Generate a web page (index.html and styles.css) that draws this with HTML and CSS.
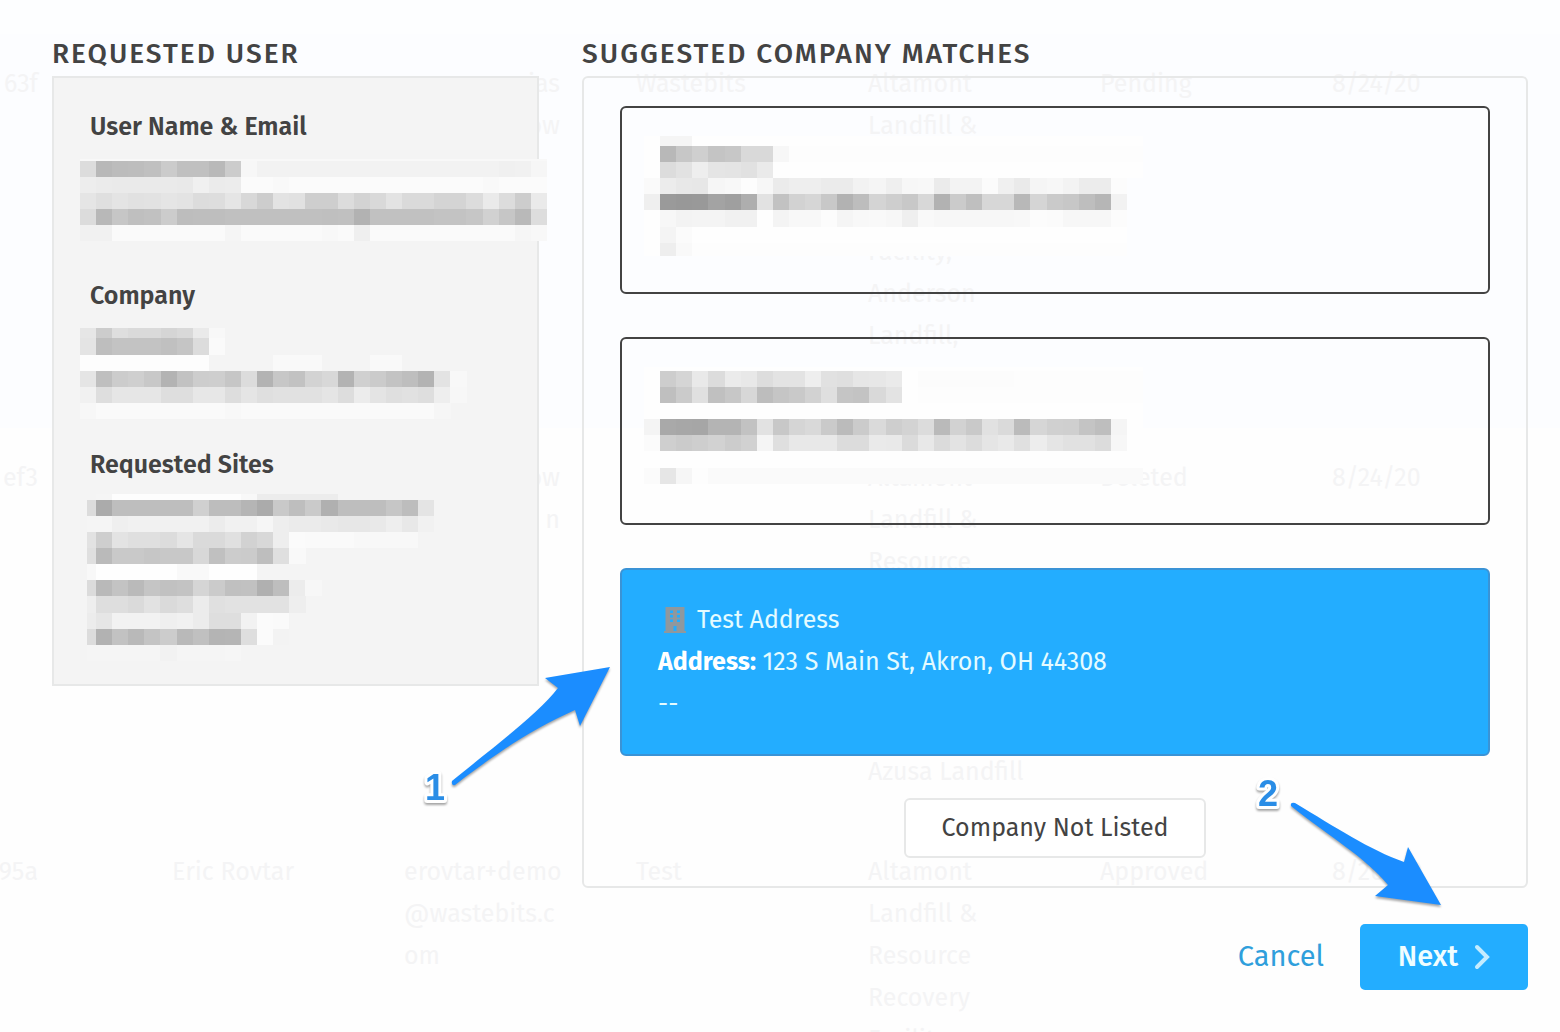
FILE: index.html
```html
<!DOCTYPE html>
<html lang="en">
<head>
    <meta charset="utf-8">
    <title>Suggested Company Matches</title>
    <link rel="stylesheet" href="styles.css">
</head>
<body>
    <div class="requests">
        <table>
            <tbody>
                <tr>
                    <td class="cut">63f</td>
                    <td></td>
                    <td class="cut">ias<br>ow</td>
                    <td>Wastebits</td>
                    <td>Altamont<br>Landfill &amp;<br>Resource<br>Recovery<br>Facility,<br>Anderson<br>Landfill,<br>&nbsp;</td>
                    <td>Pending</td>
                    <td>8/24/20</td>
                </tr>
                <tr>
                    <td class="cut">ef3</td>
                    <td></td>
                    <td class="cut">ow<br>n</td>
                    <td></td>
                    <td>Altamont<br>Landfill &amp;<br>Resource<br>Recovery<br>Facility,<br>Anderson<br>Landfill,<br>Azusa Landfill</td>
                    <td>Deleted</td>
                    <td>8/24/20</td>
                </tr>
                <tr>
                    <td class="cut">f95a</td>
                    <td>Eric Rovtar</td>
                    <td>erovtar+demo<br>@wastebits.c<br>om</td>
                    <td>Test</td>
                    <td>Altamont<br>Landfill &amp;<br>Resource<br>Recovery<br>Facility,</td>
                    <td>Approved</td>
                    <td>8/20/20</td>
                </tr>
            </tbody>
        </table>
    </div>

    <main class="modal">
        <div class="columns">
            <section>
                <h2>Requested User</h2>
                <div class="user-panel">
                    <div class="field">
                        <h3>User Name &amp; Email</h3>
                        <svg class="redacted" id="userBlock"></svg>
                    </div>
                    <div class="field">
                        <h3>Company</h3>
                        <svg class="redacted" id="companyBlock"></svg>
                    </div>
                    <div class="field">
                        <h3>Requested Sites</h3>
                        <svg class="redacted sites" id="sitesBlock"></svg>
                    </div>
                </div>
            </section>

            <section>
                <h2>Suggested Company Matches</h2>
                <div class="match-panel">
                    <ul class="matches">
                        <li>
                            <button type="button" class="match" aria-label="Match 1">
                                <svg class="redacted" id="matchOne"></svg>
                            </button>
                        </li>
                        <li>
                            <button type="button" class="match" aria-label="Match 2">
                                <svg class="redacted" id="matchTwo"></svg>
                            </button>
                        </li>
                        <li>
                            <button type="button" class="match selected">
                                <span class="line name">
                                    <svg class="building" viewBox="0 0 22 26" width="22" height="26">
                                        <path fill="#8f989e" fill-rule="evenodd" d="M1.5 0h19v24H22v2H0v-2h1.500zM6 3.500v2.500h3V3.500zm7 0v2.500h3V3.500zM6 8v2.500h3V8zm7 0v2.500h3V8zM6 12.500V15h3v-2.500zm7 0V15h3v-2.500zM9.500 19v5h3v-5z"/>
                                    </svg>
                                    Test Address
                                </span>
                                <span class="line"><b>Address:</b> 123 S Main St, Akron, OH 44308</span>
                                <span class="line">--</span>
                            </button>
                            <svg class="arrow arrow-one" viewBox="420 660 200 150" width="200" height="150">
                                <path d="M610 667L545 678L558 688C540 712 500 742 452 781Q451 786 455 785C500 750 535 728 575 710L580 726Z"/>
                                <text x="425" y="800">1</text>
                            </svg>
                        </li>
                    </ul>
                    <button type="button" class="not-listed">Company Not Listed</button>
                </div>
            </section>
        </div>

        <footer class="actions">
            <a href="#" class="cancel">Cancel</a>
            <button type="button" class="next">
                Next
                <svg viewBox="0 0 16 26" width="16" height="26"><path d="M3 3l10 10L3 23" fill="none" stroke="#c4ecff" stroke-width="4" stroke-linecap="round"/></svg>
            </button>
            <svg class="arrow arrow-two" viewBox="1250 770 200 140" width="200" height="140">
                <path d="M1441 905L1408 847L1404 862C1370 850 1335 827 1295 803Q1290 802 1291 806C1330 837 1365 857 1388 885L1375 896Z"/>
                <text x="1258" y="806">2</text>
            </svg>
        </footer>
    </main>

    <script src="redact.js"></script>
</body>
</html>
```
FILE: styles.css
```css
* {
    box-sizing: border-box;
}
body {
    margin: 0;
    min-height: 100vh;
    overflow: hidden;
    background-color: #fefefe;
    color: #434343;
    font-family: "Fira Sans", "Noto Sans", sans-serif;
    font-size: 25px;
    line-height: 42px;
}

/* faded table behind the dialog */
.requests {
    position: absolute;
    top: 0;
    left: 0;
    right: 0;
    height: 100vh;
    padding-top: 34px;
    overflow: hidden;
    background-color: #fdfeff;
    color: #f4f4f5;
}
.requests table {
    width: calc(100% + 64px);
    margin-left: -60px;
    table-layout: fixed;
    border-collapse: collapse;
}
.requests td {
    padding: 29px 0;
    vertical-align: top;
    white-space: nowrap;
}
.requests .cut {
    padding-right: 76px;
    text-align: right;
}
.requests .cut:first-child {
    padding-right: 134px;
}
.requests tr {
    background-color: #fefefe;
}
.requests tr:first-child {
    background-color: #fcfdff;
}

.modal {
    position: relative;
    padding: 32px 32px 42px 52px;
}
.columns {
    display: grid;
    grid-template-columns: 33% 1fr;
    gap: 43px;
    align-items: start;
}
h2 {
    margin: 0;
    font-size: 28px;
    font-weight: 500;
    letter-spacing: 2px;
    line-height: 44px;
    text-transform: uppercase;
    white-space: nowrap;
}
h3 {
    margin: 0;
    font-size: 25px;
    font-weight: 600;
    line-height: 42px;
}

.user-panel {
    padding: 28px 36px 22px;
    background-color: #f4f4f4;
    border: 2px solid #e7e8e8;
}
.field {
    height: 169px;
}
.field:last-child {
    height: 218px;
}
.redacted {
    display: block;
    overflow: visible;
    height: 84px;
    margin-top: 11px;
    margin-left: -10px;
}
.redacted.sites {
    margin-top: 8px;
    margin-left: -3px;
}

.match-panel {
    padding: 28px 36px;
    border: 2px solid #e7e8e8;
    border-radius: 6px;
}
.matches {
    display: grid;
    gap: 43px;
    margin: 0;
    padding: 0;
    list-style: none;
}
.matches li {
    position: relative;
}
.match {
    display: block;
    width: 100%;
    height: 188px;
    padding: 28px 36px;
    background-color: transparent;
    border: 2px solid #434343;
    border-radius: 6px;
    color: inherit;
    font: inherit;
    text-align: left;
    cursor: pointer;
}
.match .redacted {
    height: 128px;
    margin-top: 0;
    margin-left: -14px;
}
.match.selected {
    background-color: #23adff;
    border-color: #3a93d6;
    color: #e4fbff;
}
.match .line {
    display: block;
}
.match .name {
    display: flex;
    align-items: center;
    gap: 11px;
    padding-left: 6px;
}
.match b {
    color: #fff;
}

.not-listed {
    display: block;
    height: 60px;
    margin: 42px auto 0;
    padding: 0 36px;
    background-color: #fff;
    border: 2px solid #e7e8e8;
    border-radius: 6px;
    color: inherit;
    font: inherit;
    cursor: pointer;
}

.actions {
    position: relative;
    display: flex;
    justify-content: flex-end;
    align-items: center;
    gap: 36px;
    margin-top: 36px;
    font-size: 29px;
}
.cancel {
    color: #2f9fdc;
    text-decoration: none;
}
.next {
    display: flex;
    justify-content: center;
    align-items: center;
    gap: 16px;
    width: 168px;
    height: 66px;
    background-color: #23adff;
    border: none;
    border-radius: 5px;
    color: #f0fdff;
    font: inherit;
    font-weight: 500;
    cursor: pointer;
}

/* numbered step arrows */
.arrow {
    position: absolute;
    fill: #1b8dff;
    filter: drop-shadow(0 2px 1px rgba(0, 0, 0, 0.35));
    pointer-events: none;
}
.arrow text {
    fill: #2a8de6;
    stroke: #fff;
    stroke-width: 6px;
    stroke-linejoin: round;
    paint-order: stroke;
    font-family: "Liberation Sans", sans-serif;
    font-size: 36px;
    font-weight: 700;
}
.arrow-one {
    top: 92px;
    right: 100%;
}
.arrow-two {
    right: 78px;
    bottom: 80px;
}
```
FILE: redact.js
```js
var SIZE = 16.1;

// each row is [y, height, grey levels as hex pairs]
// a trailing "xx*n" repeats the level n times
function drawBlock(id, firstWidth, rows) {
    var svg = document.getElementById(id);
    var out = "";
    rows.forEach(function (row) {
        var x = 0;
        row[2].split(" ").forEach(function (part, i) {
            var bits = part.split("*");
            var w = (i === 0 && !bits[1] ? firstWidth : SIZE) * (bits[1] || 1);
            out += '<rect x="' + x.toFixed(1) + '" y="' + row[0] + '" width="' + (w + 0.2).toFixed(1) + '" height="' + row[1] + '" fill="#' + bits[0] + bits[0] + bits[0] + '"/>';
            x += w;
        });
    });
    svg.setAttribute("shape-rendering", "crispEdges");
    svg.innerHTML = out;
}

drawBlock("userBlock", SIZE, [
    [0, 2, "f8*29"],
    [2, 16, "dc b8 bc bd c0 cb c0 c0 b9 cc f7 f2*15 f0 f1 f6"],
    [18, 16, "ed eb ea ea ea ea e9 f0 eb ec fb fb f9 fb*12 f9 fb*3"],
    [34, 16, "e5 df e4 e1 e2 e5 e3 dc dd e5 d8 cd e3 e1 ce ce dc d3 d9 e3 da da d4 d4 dc ea dc cd ea"],
    [50, 16, "dc b8 c6 bf c1 cc bd be be c0 c0 c0 c0 c0 c0 bf c0 b2 c1 c1 c1 c1 c3 c3 c6 d1 c6 b9 dd"],
    [66, 16, "f1 f1 fa*7 f5 fa*5 f8 fa ef fa*9 f6 f8"]
]);

drawBlock("companyBlock", SIZE, [
    [0, 10, "e6 cc de da da d5 d9 ea f8"],
    [10, 17, "e4 be c3 c3 c3 c0 c5 dc fa"],
    [27, 16, "fd*8 f4*4 f9*3 f4*3 f9*2"],
    [43, 16, "e5 bf cc cf c8 b3 c2 cd ce c6 dc b3 c7 c2 d3 d8 b3 d0 cb c3 be b3 e3 f8"],
    [59, 16, "f1 de e6 e6 e6 de de e7 e7 dd e5 df e1 e1 e1 e5 dd ec e4 df e1 de ee f7"],
    [75, 16, "f7 fa*8 f8 fa*12 f6"]
]);

drawBlock("sitesBlock", 9, [
    [0, 6, "f4 f5 fd*8 f8 ec*5"],
    [6, 16, "dc ab be be be be be d0 bd bd b5 ab c9 be ca b0 be be be c6 bd e4"],
    [22, 16, "f5 f5 ef f1 f1 f1 f1 f1 ec f1 f1 f6 ee eb eb e9 e7 e7 e9 ee e8 f1"],
    [38, 16, "e2 ce e3 df df dc e5 da da e0 d2 d8 ee fb fa*3 f8*4"],
    [54, 16, "df ba c9 c9 c6 c8 c8 d8 c0 cc cb be df f9"],
    [70, 16, "f8 fe*5 f9*2 fe*3"],
    [86, 16, "db b9 c3 ba c5 c1 c3 d5 cb c0 c1 b0 be ec f7"],
    [102, 17, "ee de de da e2 da de ec e0 e2 e2 e2 e2 ee"],
    [119, 16, "ec e6 f2 f2 f2 ef f1 ec de de f2 fb fa"],
    [135, 16, "dc b2 c2 b9 c4 cc b9 c0 b4 b5 de fb f3"],
    [151, 16, "f5 f5*4 f2 f5*3 f6"]
]);

drawBlock("matchOne", SIZE, [
    [0, 10, "fe f5 f5 fe*28"],
    [10, 16, "fe b8 c7 cf c4 c7 d9 d9 f7 fd*22"],
    [26, 16, "fe dc e2 ee e5 e4 e1 ea fe*23"],
    [42, 16, "fa ec e8 e7 f6 f8 fd f7 eb ee ee eb eb f2 f5 ef f7 f8 eb f3 f3 fb f0 ea f5 f7 f3 ec ec fc"],
    [58, 16, "ef 9a 98 99 a3 9f ae e2 c2 d2 d6 c8 b2 bd d4 ce c8 d8 b2 cb bf d7 d7 b8 d5 ca c7 be b6 f2"],
    [74, 17, "fe f7 f3 f4 f4 f1 f1 fe f4 f8 f8 fc f5 f8 f9 f7 ef f9 f7 f7 f7 f7 f7 f8 fc fb f7 f7 f7 fc"],
    [91, 16, "fe f4 fb fe*27"],
    [107, 13, "fe ee f9 fd*27"]
]);

drawBlock("matchTwo", SIZE, [
    [0, 4, "fe*31"],
    [4, 16, "fe cd d5 e9 dc eb e8 dd e3 e3 ee e1 df e6 e7 ea fe fc*6 fd*8"],
    [20, 16, "fe bf cb e0 c0 c7 d7 bd c5 c9 d2 df c5 c3 d9 e3 fe fd*14"],
    [36, 16, "fe*31"],
    [52, 16, "f4 a9 a7 a6 b4 b4 c2 e2 c8 d5 d9 ca bb cb da ce d3 dc ba d2 c9 e1 da bb d6 d0 cf c4 be f5 fe"],
    [68, 16, "fb cf cb ce d2 cc d1 f5 df e8 e8 e8 dc dc ea e9 db e8 db e3 dc e5 e9 e0 ed e5 e1 e1 dc f7 fe"],
    [84, 17, "fe*31"],
    [101, 16, "fb e6 f6 fd fa*27"]
]);
```
